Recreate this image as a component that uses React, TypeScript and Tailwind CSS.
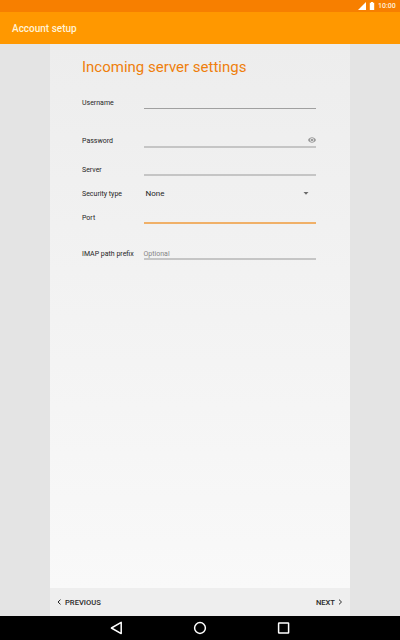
import type { ReactNode } from "react";

type FieldRowProps = {
  label: string;
  className: string;
  children: ReactNode;
};

function FieldRow({ label, className, children }: FieldRowProps) {
  return (
    <div className={`flex items-center ${className}`}>
      <label className="w-[61.5px] shrink-0 pt-0.5 whitespace-nowrap text-[7px] leading-none text-[#252525]">
        {label}
      </label>
      {children}
    </div>
  );
}

function StatusBar() {
  return (
    <div className="flex h-3 items-center justify-end bg-[#f77f00] pr-1 text-white">
      <svg width="8" height="8" viewBox="0 0 8 8" fill="currentColor">
        <path d="M8 0v8H0z" />
      </svg>
      <svg className="ml-[3px]" width="6" height="8" viewBox="0 0 6 8" fill="currentColor">
        <path d="M2 0h2v.8h1.2V8H.8V.8H2z" />
      </svg>
      <span className="ml-[3px] w-[18px] pt-px whitespace-nowrap text-[7px] leading-none font-medium text-[#fff0dc]">
        10:00
      </span>
    </div>
  );
}

function NavigationBar() {
  return (
    <div className="flex h-6 items-center justify-center gap-[70px] bg-black text-white">
      <svg width="14" height="14" viewBox="0 0 14 14" fill="none" stroke="currentColor" strokeWidth="1.5" strokeLinejoin="round">
        <path d="M12.2 1.4v11.2L2.4 7z" />
      </svg>
      <svg width="14" height="14" viewBox="0 0 14 14" fill="none" stroke="currentColor" strokeWidth="1.5">
        <circle cx="7" cy="7" r="5.4" />
      </svg>
      <svg width="14" height="14" viewBox="0 0 14 14" fill="none" stroke="currentColor" strokeWidth="1.5">
        <rect x="1.6" y="2" width="10" height="10" rx="0.5" />
      </svg>
    </div>
  );
}

export default function App() {
  return (
    <div className="flex h-[640px] w-[400px] flex-col overflow-hidden bg-[#e4e4e4] font-['Roboto',sans-serif]">
      <StatusBar />
      <header className="flex h-8 items-center bg-[#ff9800] pl-3 text-[10px] font-medium text-[#fff3d8]">
        Account setup
      </header>

      <main className="mx-auto flex w-[300px] flex-1 flex-col">
        <div className="flex-1 bg-linear-to-b from-[#ededed] to-[#f9f9f9] pr-[34px] pl-8">
          <h1 className="pt-3 text-[15px] leading-[22px] whitespace-nowrap text-[#ef7f0c]">
            Incoming server settings
          </h1>

          <FieldRow label="Username" className="mt-[18px] h-[13px]">
            <div className="h-full flex-1 border-b border-[#a0a0a0]" />
          </FieldRow>

          <FieldRow label="Password" className="mt-[23px] h-4">
            <div className="flex h-full flex-1 items-center justify-end border-b-2 border-[#c5c5c5] pt-0.5">
              <svg width="8" height="6" viewBox="0 0 8 6" fill="#9a9a9a">
                <path fillRule="evenodd" d="M0 3C1.6-.6 6.4-.6 8 3 6.4 6.6 1.6 6.6 0 3zm4-1.9a1.9 1.9 0 1 0 0 3.8 1.9 1.9 0 0 0 0-3.8z" />
                <circle cx="4" cy="3" r="1.2" />
              </svg>
            </div>
          </FieldRow>

          <FieldRow label="Server" className="mt-3.5 h-3.5">
            <div className="h-full flex-1 border-b-2 border-[#c5c5c5]" />
          </FieldRow>

          <FieldRow label="Security type" className="mt-2.5 h-3.5">
            <div className="flex flex-1 items-center justify-between pt-0.5 pr-[7px] pl-0.5 text-[8px] leading-none text-[#252525]">
              None
              <svg className="mb-px" width="6" height="3" viewBox="0 0 6 3" fill="#6a6a6a">
                <path d="M.5 0h5L3 2.7z" />
              </svg>
            </div>
          </FieldRow>

          <FieldRow label="Port" className="mt-2.5 h-3.5">
            <div className="h-full flex-1 border-b-2 border-[#f0b068]" />
          </FieldRow>

          <FieldRow label="IMAP path prefix" className="mt-[22px] h-3.5">
            <div className="flex h-full flex-1 items-center border-b-2 border-[#c5c5c5] pt-1 text-[7px] leading-none text-[#858585]">
              Optional
            </div>
          </FieldRow>
        </div>

        <footer className="flex h-7 items-center justify-between bg-[#eeeeee] px-[7px] text-[7.6px] font-medium text-[#2a2a2a]">
          <div className="flex items-center gap-[3px]">
            <svg width="5" height="6" viewBox="0 0 5 6" fill="none" stroke="currentColor">
              <path d="M3.5.6 1 3l2.5 2.4" />
            </svg>
            <span className="pt-px">PREVIOUS</span>
          </div>
          <div className="flex items-center gap-[3px]">
            <span className="pt-px">NEXT</span>
            <svg width="5" height="6" viewBox="0 0 5 6" fill="none" stroke="currentColor">
              <path d="M1 .6 3.5 3 1 5.4" />
            </svg>
          </div>
        </footer>
      </main>

      <NavigationBar />
    </div>
  );
}
